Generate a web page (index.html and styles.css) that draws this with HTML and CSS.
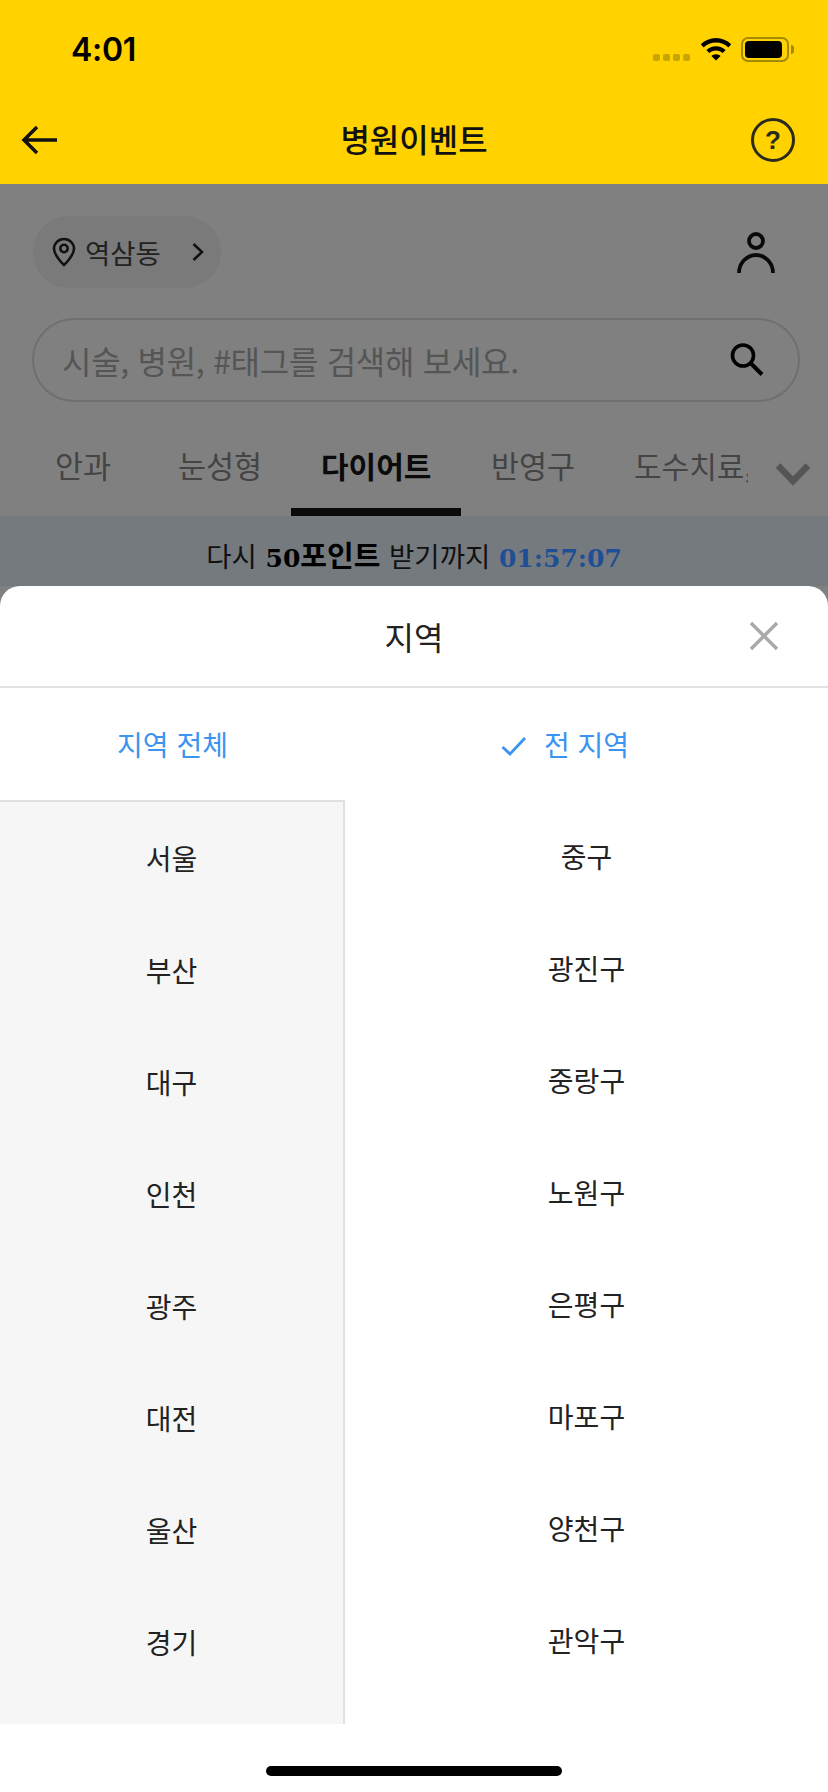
FILE: index.html
```html
<!DOCTYPE html>
<html lang="ko">
<head>
<meta charset="utf-8">
<title>병원이벤트</title>
<link rel="stylesheet" href="styles.css">
</head>
<body>
<div class="screen">
  <header class="top">
    <div class="status">
      <span class="time">4:01</span>
      <div class="status-icons">
        <span class="signal"><i></i><i></i><i></i><i></i></span>
        <svg class="wifi" width="32" height="24" viewBox="0 0 32 24"><path d="M16 1C10 1 5 3.300 .8 7.200l2.800 3.200C7.200 7.100 11.300 5.400 16 5.400s8.800 1.700 12.400 5l2.800-3.200C27 3.300 22 1 16 1zM16 9.200c-3.800 0-7 1.400-9.600 3.800l2.800 3.100c1.800-1.700 4.200-2.600 6.800-2.600s5 .9 6.800 2.600l2.800-3.100C23 10.600 19.800 9.200 16 9.200zM16 17.200c-1.900 0-3.400.7-4.600 1.800L16 23.600l4.600-4.600c-1.200-1.100-2.700-1.800-4.600-1.800z" fill="#000"/></svg>
        <span class="battery"><i></i></span><span class="nub"></span>
      </div>
    </div>
    <div class="nav">
      <svg class="back" width="38" height="30" viewBox="0 0 38 30"><path d="M36 15H3M16 2 3 15l13 13" fill="none" stroke="#111" stroke-width="3.500"/></svg>
      <h1 class="nav-title">병원이벤트</h1>
      <span class="help">?</span>
    </div>
  </header>

  <main class="page">
    <div class="loc-row">
      <div class="loc">
        <svg width="24" height="30" viewBox="0 0 24 30"><path d="M12 2C6.500 2 2 6.400 2 11.800 2 18.500 12 28 12 28s10-9.500 10-16.200C22 6.400 17.500 2 12 2z" fill="none" stroke="#111" stroke-width="2.500"/><circle cx="12" cy="11.500" r="3.700" fill="none" stroke="#111" stroke-width="2.500"/></svg>
        <span class="loc-name">역삼동</span>
        <svg class="loc-chev" width="14" height="20" viewBox="0 0 14 20"><path d="M2.500 2 11 10l-8.500 8" fill="none" stroke="#111" stroke-width="2.500"/></svg>
      </div>
      <svg class="user" width="40" height="44" viewBox="0 0 40 44"><circle cx="20" cy="9" r="7" fill="none" stroke="#0a0a0a" stroke-width="3.800"/><path d="M3 41A17 18 0 0 1 37 41" fill="none" stroke="#0a0a0a" stroke-width="3.800"/></svg>
    </div>

    <div class="search">
      <span class="search-text">시술, 병원, #태그를 검색해 보세요.</span>
      <svg width="36" height="36" viewBox="0 0 36 36"><circle cx="14" cy="13.500" r="10.500" fill="none" stroke="#000" stroke-width="3.600"/><path d="M21.500 21 33 32.500" stroke="#000" stroke-width="4"/></svg>
    </div>

    <nav class="tabs">
      <span class="tab t1">안과</span>
      <span class="tab t2">눈성형</span>
      <span class="tab t3 active">다이어트</span>
      <span class="tab t4">반영구</span>
      <span class="tab t5">도수치료,</span>
      <svg class="tab-chev" width="36" height="24" viewBox="0 0 36 24"><path d="M3 3.500 18 19 33 3.500" fill="none" stroke="#555" stroke-width="6.500"/></svg>
    </nav>

    <div class="band">다시 <b class="hl"><span class="num">50</span>포인트</b> 받기까지 <b class="num timer">01:57:07</b></div>
  </main>

  <section class="sheet">
    <div class="sheet-head">
      <h2 class="sheet-title">지역</h2>
      <svg class="close" width="30" height="30" viewBox="0 0 30 30"><path d="M2 2l26 26M28 2 2 28" stroke="#aaa" stroke-width="3.500"/></svg>
    </div>
    <div class="sel-row">
      <div class="sel sel-left">지역 전체</div>
      <div class="sel sel-right">
        <svg class="sel-check" width="26" height="20" viewBox="0 0 26 20"><path d="M1.500 11 9 18 24 2" fill="none" stroke="#3b94f0" stroke-width="2.800"/></svg>
        <span>전 지역</span>
      </div>
    </div>
    <div class="lists">
      <ul class="list left">
        <li>서울</li><li>부산</li><li>대구</li><li>인천</li><li>광주</li><li>대전</li><li>울산</li><li>경기</li>
      </ul>
      <ul class="list right">
        <li>중구</li><li>광진구</li><li>중랑구</li><li>노원구</li><li>은평구</li><li>마포구</li><li>양천구</li><li>관악구</li>
      </ul>
    </div>
    <div class="home"><span class="home-bar"></span></div>
  </section>
</div>
</body>
</html>
```

FILE: styles.css
```css
* { box-sizing: border-box; }
html, body { margin: 0; padding: 0; }
body { font-family: "Noto Sans CJK KR", "Noto Sans", sans-serif; background: #808080; }
h1, h2, ul { margin: 0; padding: 0; font-weight: 400; }
li { list-style: none; }
.screen { position: relative; width: 828px; height: 1792px; overflow: hidden; background: #808080; }

.top { height: 184px; background: #ffd200; }
.status { height: 100px; display: flex; justify-content: space-between; align-items: flex-start; padding: 29px 34px 0 71px; }
.time { font: 600 32px/42px Inter, "Liberation Sans", sans-serif; color: #000; letter-spacing: -.3px; }
.status-icons { display: flex; align-items: flex-start; margin-top: 8px; }
.signal { display: flex; gap: 3px; margin-top: 17px; margin-right: 10px; }
.signal i { width: 7px; height: 7px; border-radius: 2px; background: #c8a600; }
.wifi { margin-right: 9px; }
.battery { width: 48px; height: 25px; border: 2px solid #a58a05; border-radius: 7px; padding: 2px 5px 2px 2px; display: flex; }
.battery i { flex: 1; background: #000; border-radius: 4px; }
.nub { width: 3px; height: 9px; background: #a58a05; border-radius: 0 3px 3px 0; margin: 8px 0 0 2px; }

.nav { height: 84px; position: relative; display: flex; align-items: center; justify-content: space-between; padding: 0 33px 4px 21px; }
.nav-title { position: absolute; left: 0; right: 0; top: 0; text-align: center; font-size: 32px; line-height: 40px; font-weight: 500; color: #111; margin-top: 18px; }
.help { width: 44px; height: 44px; border: 3px solid #2b2b1a; border-radius: 50%; font: 700 26px/38px "Liberation Sans", sans-serif; text-align: center; color: #2b2b1a; }

.page { display: flex; flex-direction: column; }
.loc-row { display: flex; justify-content: space-between; align-items: center; padding: 32px 52px 0 33px; }
.loc { width: 188px; height: 72px; border-radius: 36px; background: #7a7a7a; display: flex; align-items: center; padding-left: 19px; gap: 9px; }
.loc-name { font-size: 27.500px; line-height: 36px; color: #222; }
.loc-chev { margin-left: 21px; }
.user { margin-top: 4px; }
.search { margin: 30px 28px 0 32px; height: 84px; border: 2px solid #6f6f6f; border-radius: 42px; display: flex; align-items: center; justify-content: space-between; padding: 0 33px 0 28px; }
.search-text { font-size: 32px; line-height: 40px; color: #555; letter-spacing: -.3px; }
.tabs { position: relative; height: 114px; }
.tab { position: absolute; top: 41px; font-size: 30.500px; line-height: 44px; color: #444; white-space: nowrap; }
.t1 { left: 55px; }
.t2 { left: 178px; }
.t3 { left: 321px; font-size: 30px; font-weight: 700; color: #0a0a0a; }
.t4 { left: 491px; }
.t5 { left: 634px; width: 114px; font-size: 30px; overflow: hidden; }
.active::after { content: ""; position: absolute; left: -30px; right: -30px; top: 65px; height: 8px; background: #0a0a0a; }
.tab-chev { position: absolute; left: 775px; top: 60px; }
.band { height: 70px; background: #757a7e; text-align: center; font-size: 27.500px; line-height: 76px; color: #111; word-spacing: 1px; }
.band b { font-weight: 700; color: #000; }
.band .hl { font-size: 29px; }
.band .num { font-family: "DejaVu Serif", serif; font-size: 25px; font-weight: 700; }
.band .timer { color: #1e4f94; }

.sheet { position: absolute; left: 0; right: 0; top: 586px; bottom: 0; background: #fff; border-radius: 20px 20px 0 0; display: flex; flex-direction: column; }
.sheet-head { height: 102px; border-bottom: 2px solid #e2e2e2; display: flex; align-items: center; justify-content: center; position: relative; }
.sheet-title { font-size: 32px; line-height: 44px; color: #222; }
.close { position: absolute; right: 49px; top: 35px; }
.sel-row { display: flex; height: 112px; }
.sel { display: flex; align-items: center; justify-content: center; font-size: 28px; color: #3b94f0; }
.sel-left { width: 345px; }
.sel-right { flex: 1; gap: 17px; }
.sel-check { margin-left: -43px; margin-top: 4px; }
.lists { display: flex; height: 924px; }
.list { overflow: hidden; }
.list li { height: 112px; display: flex; align-items: center; justify-content: center; font-size: 28px; color: #222; }
.left { width: 345px; background: #f6f6f6; border-top: 2px solid #e0e0e0; border-right: 2px solid #e0e0e0; }
.right { flex: 1; }
.home { flex: 1; display: flex; justify-content: center; align-items: flex-start; padding-top: 42px; }
.home-bar { width: 296px; height: 10px; border-radius: 5px; background: #000; }
```
